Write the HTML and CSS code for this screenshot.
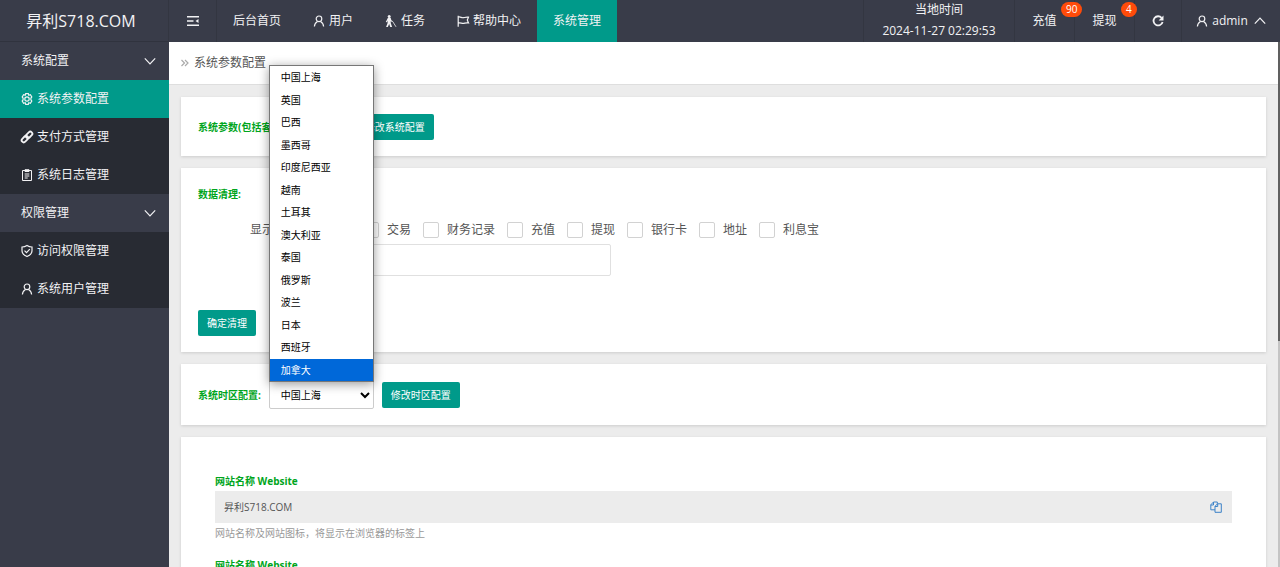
FILE: index.html
```html
<!DOCTYPE html>
<html lang="zh-CN">
<head>
<meta charset="utf-8">
<title>昇利S718.COM</title>
<link rel="stylesheet" href="styles.css">
</head>
<body>
<svg class="defs" aria-hidden="true">
  <symbol id="user" viewBox="0 0 12 12"><circle cx="6" cy="3.8" r="2.8"/><path d="M1.4 11.6C1.4 8.8 2.8 7.4 4.5 6.4M10.6 11.6C10.6 8.8 9.2 7.4 7.5 6.4"/></symbol>
  <symbol id="down" viewBox="0 0 12 12"><path d="M.8 3.4 6 8.8l5.200-5.400"/></symbol>
</svg>
<header class="header">
  <a class="logo" href="#">昇利S718.COM</a>
  <button class="cell toggle" type="button" aria-label="收起菜单">
    <svg class="icon" viewBox="0 0 12 12"><path class="bars" d="M0 1.700h12M0 6h6.500M0 10.300h12"/><path class="fill" d="M11.500 3.900v4.200L8.500 6z"/></svg>
  </button>
  <nav class="nav">
    <a href="#">后台首页</a>
    <a href="#"><svg class="icon"><use href="#user"/></svg>用户</a>
    <a href="#"><svg class="icon" viewBox="0 0 12 12"><circle class="fill" cx="4.200" cy="1.400" r="1.500"/><path class="fill" d="M2.800 3h2.900l.7 2.200 1.500 1-.5.9-1.800-.8.3 2.100 1.200 3.600H5.200L4.200 9l-1.400 3H1.100l1.500-4V5.500L1.900 7.300.8 7z"/><path class="stick" d="m7.700 6.500 3.300 5.300"/></svg>任务</a>
    <a href="#"><svg class="icon" viewBox="0 0 12 12"><path d="M1.200.8v11M1.200 2.200c2-1 3.300.9 5.300.5 1.800-.4 3-.9 5-.5L10.300 5l1.200 3c-2-.4-3.200.1-5 .4-2 .2-3.300-1.300-5.300-.3"/></svg>帮助中心</a>
    <a class="active" href="#">系统管理</a>
  </nav>
  <div class="clock"><span>当地时间</span><time>2024-11-27 02:29:53</time></div>
  <a class="cell count" href="#">充值<span class="badge">90</span></a>
  <a class="cell count" href="#">提现<span class="badge">4</span></a>
  <button class="cell refresh" type="button" aria-label="刷新">
    <svg class="icon" viewBox="0 0 12 12"><path class="thick" d="M9.600 2.800A4.600 4.600 0 1 0 10.600 7"/><path class="fill" d="M11.500.5v5H6.600z"/></svg>
  </button>
  <button class="cell account" type="button"><svg class="icon"><use href="#user"/></svg>admin<svg class="icon up"><use href="#down"/></svg></button>
</header>
<div class="body">
  <nav class="sidebar">
    <a class="group" href="#">系统配置<svg class="icon"><use href="#down"/></svg></a>
    <a class="active" href="#"><svg class="icon" viewBox="0 0 12 12"><circle cx="6" cy="6" r="2.200"/><path d="M4.700.6h2.600l.5 1.600 1.600-.5 1.400 2.200L9.900 5.200v1.600l.9 1.300-1.400 2.200-1.600-.5-.5 1.600H4.700l-.5-1.600-1.600.5-1.400-2.200.9-1.300V5.200l-.9-1.300 1.400-2.200 1.600.5z"/></svg>系统参数配置</a>
    <a href="#"><svg class="icon" viewBox="0 0 12 12"><g class="thick" transform="rotate(-45 6 6)"><rect x="-.7" y="3.900" width="7.400" height="4.200" rx="2.100"/><rect x="5.300" y="3.900" width="7.400" height="4.200" rx="2.100"/></g></svg>支付方式管理</a>
    <a href="#"><svg class="icon thin" viewBox="0 0 12 12"><path d="M1.500 1.500h9v10h-9zM4 .7h4v1.800H4zM3.700 5h4.600M3.700 7h4.600M3.700 9h3"/></svg>系统日志管理</a>
    <a class="group" href="#">权限管理<svg class="icon"><use href="#down"/></svg></a>
    <a href="#"><svg class="icon" viewBox="0 0 12 12"><path d="M6 .5c1.500 1 3.200 1.500 5 1.500v3.500c0 3-2 4.800-5 6-3-1.200-5-3-5-6V2C2.800 2 4.500 1.500 6 .5zM3.500 5.700l2 2 3.300-3.500"/></svg>访问权限管理</a>
    <a href="#"><svg class="icon"><use href="#user"/></svg>系统用户管理</a>
  </nav>
  <main class="main">
    <div class="crumb"><svg class="icon" viewBox="0 0 12 12"><path d="m2.500 3 3 3-3 3M6 3l3 3-3 3"/></svg>系统参数配置</div>
    <div class="cards">
      <section class="card row first">
        <span class="label">系统参数(包括客服链接等配置项):</span>
        <button class="btn" type="button">修改系统配置</button>
      </section>
      <section class="card clean">
        <h2 class="label">数据清理:</h2>
        <div class="checks">
          <span class="checks-title">显示内容</span>
          <label><input type="checkbox">用户</label>
          <label><input type="checkbox">交易</label>
          <label><input type="checkbox">财务记录</label>
          <label><input type="checkbox">充值</label>
          <label><input type="checkbox">提现</label>
          <label><input type="checkbox">银行卡</label>
          <label><input type="checkbox">地址</label>
          <label><input type="checkbox">利息宝</label>
        </div>
        <input class="text" type="text" aria-label="清理内容">
        <button class="btn" type="button">确定清理</button>
      </section>
      <section class="card row">
        <label class="label" for="zone">系统时区配置:</label>
        <div class="select">
          <select id="zone"><option>中国上海</option></select>
          <svg class="arrow" viewBox="0 0 10 10"><path d="M1 3l4 4 4-4"/></svg>
          <ul class="options" role="listbox" aria-label="时区">
            <li role="option">中国上海</li>
            <li role="option">英国</li>
            <li role="option">巴西</li>
            <li role="option">墨西哥</li>
            <li role="option">印度尼西亚</li>
            <li role="option">越南</li>
            <li role="option">土耳其</li>
            <li role="option">澳大利亚</li>
            <li role="option">泰国</li>
            <li role="option">俄罗斯</li>
            <li role="option">波兰</li>
            <li role="option">日本</li>
            <li role="option">西班牙</li>
            <li role="option" class="picked">加拿大</li>
          </ul>
        </div>
        <button class="btn" type="button">修改时区配置</button>
      </section>
      <section class="card site">
        <label class="label" for="name">网站名称 Website</label>
        <div class="field">
          <input id="name" type="text" value="昇利S718.COM" readonly>
          <button type="button" aria-label="复制"><svg class="icon thin" viewBox="0 0 12 12"><path d="M5 5.300 7.500 2.800h3.800v8.500H5zM5 5.500h2.700V2.800M5 8.800H.8V3.800L3.500 1h3.800v1.800M.8 4h2.700V1"/></svg></button>
        </div>
        <p class="hint">网站名称及网站图标，将显示在浏览器的标签上</p>
        <label class="label" for="title">网站名称 Website</label>
        <div class="field"><input id="title" type="text" readonly></div>
      </section>
    </div>
  </main>
  <div class="scroll"></div>
</div>
</body>
</html>
```
FILE: styles.css
```css
* { box-sizing: border-box; }
body {
  margin: 0;
  height: 100vh;
  display: flex;
  flex-direction: column;
  overflow: hidden;
  background: #ececec;
  color: #555;
  font: 12px/20px "Open Sans", "Noto Sans CJK SC", sans-serif;
}
a { color: inherit; text-decoration: none; }
button, input, select { font: inherit; color: inherit; }
button { border: 0; background: none; padding: 0; }
.defs { position: absolute; width: 0; height: 0; }
.icon {
  width: 12px;
  height: 12px;
  flex: none;
  fill: none;
  stroke: currentColor;
  stroke-width: 1.2;
  overflow: visible;
}
.thin { stroke-width: 1; }
.thick { stroke-width: 1.8; }
.bars { stroke-width: 1.4; }
.stick { stroke-width: .8; }
.fill { fill: currentColor; stroke: none; }

.header { display: flex; flex: none; height: 42px; background: #393c49; color: #f2f2f4; }
.logo {
  width: 168px;
  padding-right: 6px;
  display: flex;
  align-items: center;
  justify-content: center;
  font-size: 16px;
  border-bottom: 1px solid #30333e;
}
.cell {
  display: flex;
  align-items: center;
  justify-content: center;
  border-left: 1px solid #333641;
}
.toggle { width: 48px; }
.nav { flex: 1; display: flex; border-left: 1px solid #333641; }
.nav a { display: flex; align-items: center; gap: 4px; padding: 0 16px; }
.nav .active { background: #009a8a; }
.clock {
  width: 151px;
  display: flex;
  flex-direction: column;
  align-items: center;
  justify-content: center;
  line-height: 21px;
  padding-bottom: 2px;
  border-left: 1px solid #333641;
}
.count { position: relative; width: 60px; }
.badge {
  position: absolute;
  z-index: 1;
  top: 2px;
  left: 46px;
  padding: 0 5px;
  border-radius: 8px;
  background: #ff4b0a;
  color: #fff;
  font-size: 10px;
  line-height: 15px;
}
.refresh { width: 47px; }
.account { width: 99px; gap: 4px; }
.up { transform: rotate(180deg); margin-left: 2px; }

.body { flex: 1; display: flex; min-height: 0; }
.sidebar { width: 169px; flex: none; background: #393c49; color: #f2f2f4; }
.sidebar a {
  display: flex;
  align-items: center;
  gap: 4px;
  height: 38px;
  padding: 0 13px 0 21px;
  background: #282b33;
}
.sidebar .group { background: #393c49; justify-content: space-between; }
.sidebar .active { background: #009a8a; }

.main { flex: 1; min-width: 0; }
.crumb {
  display: flex;
  align-items: center;
  gap: 3px;
  height: 43px;
  padding-left: 10px;
  background: #fff;
  border-bottom: 1px solid #dedede;
}
.crumb .icon { color: #aaa; }
.cards { display: flex; flex-direction: column; gap: 12px; padding: 12px; }
.card { background: #fff; padding: 16px 17px; box-shadow: 0 1px 3px #0002; }
.row { display: flex; align-items: center; gap: 8px; height: 61px; }
.first { height: 59px; }
.label { margin: 0; color: #00a51c; font-size: 10px; font-weight: 700; line-height: 20px; }
.btn {
  height: 26px;
  padding: 0 9px;
  border-radius: 2px;
  background: #009a8a;
  color: #fff;
  font-size: 10px;
}
.clean { display: flex; flex-direction: column; align-items: flex-start; }
.checks { display: flex; align-items: center; padding-left: 52px; margin: 16px 0 4px; }
.checks-title { width: 53px; }
.checks label { display: flex; align-items: center; gap: 8px; margin-right: 12px; }
.checks input {
  appearance: none;
  width: 16px;
  height: 16px;
  margin: 0;
  border: 1px solid #d2d2d2;
  border-radius: 2px;
}
.text {
  width: 304px;
  height: 32px;
  margin: 0 0 34px 109px;
  border: 1px solid #e0e0e0;
  border-radius: 2px;
}
.select { position: relative; width: 105px; color: #000; font-size: 10px; }
.select select {
  display: block;
  appearance: none;
  width: 100%;
  height: 29px;
  padding: 0 11px;
  border: 1px solid #ccc;
  border-radius: 2px;
  background: #fff;
}
.arrow {
  position: absolute;
  right: 4px;
  top: 10px;
  width: 10px;
  height: 10px;
  fill: none;
  stroke: #000;
  stroke-width: 2;
}
.options {
  position: absolute;
  left: 0;
  bottom: calc(100% - 2px);
  width: 100%;
  height: 317px;
  margin: 0;
  padding: 0;
  display: grid;
  grid-auto-rows: 1fr;
  list-style: none;
  background: #fff;
  border: 1px solid #777;
  box-shadow: 0 2px 10px #0006;
}
.options li { display: flex; align-items: center; padding-left: 11px; }
.options .picked { background: #0068d9; color: #fff; }

.site { padding: 34px; }
.site .label { display: block; }
.field { display: flex; align-items: center; height: 32px; background: #ececec; padding: 0 10px 0 9px; font-size: 10px; }
.field input { flex: 1; min-width: 0; border: 0; padding: 0; background: none; }
.field button { display: flex; color: #3c83c9; }
.hint { margin: 0 0 12px; color: #999; font-size: 10px; line-height: 20px; }

.scroll { width: 2px; flex: none; background: linear-gradient(#606060 299px, #c4c4c4 299px); }
```
